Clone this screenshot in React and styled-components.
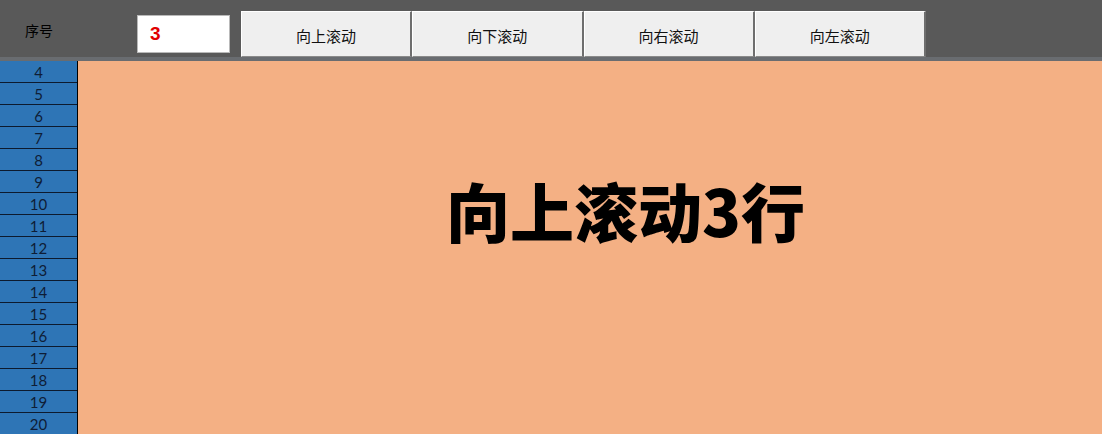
import React from "react";
import styled, { createGlobalStyle } from "styled-components";

const Global = createGlobalStyle`
  html, body { margin: 0; padding: 0; background: #F4B084; }
  body { font-family: "Noto Sans CJK SC", "Noto Sans", sans-serif; }
`;

const Page = styled.div`
  width: 1102px;
  height: 434px;
  overflow: hidden;
  display: flex;
  flex-direction: column;
`;

const Toolbar = styled.div`
  height: 57px;
  flex: 0 0 57px;
  background: #595959;
  border-bottom: 4px solid #696c70;
  display: flex;
  align-items: flex-start;
`;

const Label = styled.div`
  width: 78px;
  height: 57px;
  display: flex;
  align-items: center;
  justify-content: center;
  padding-top: 3px;
  box-sizing: border-box;
  font-size: 14px;
  color: #000;
`;

const NumberBox = styled.div`
  margin-left: 59px;
  margin-top: 15px;
  width: 93px;
  height: 38px;
  box-sizing: border-box;
  background: #fff;
  border: 1px solid #b9b9b9;
  display: flex;
  align-items: center;
  padding-left: 12px;
  font-family: "Liberation Sans", Arial, sans-serif;
  font-weight: 700;
  font-size: 19px;
  color: #e00000;
`;

const Buttons = styled.div`
  margin-left: 11px;
  margin-top: 11px;
  width: 685px;
  display: flex;
`;

const Button = styled.div`
  flex: 1;
  height: 46px;
  box-sizing: border-box;
  background: #efefef;
  border-left: 1px solid #fff;
  border-top: 1px solid #fff;
  border-right: 2px solid #6e6e6e;
  border-bottom: 1px solid #8a8a8a;
  display: flex;
  align-items: center;
  justify-content: center;
  padding-top: 2px;
  font-size: 15px;
  color: #111;
`;

const Body = styled.div`
  flex: 1;
  display: flex;
  min-height: 0;
`;

const RowHeaders = styled.div`
  width: 77px;
  flex: 0 0 77px;
  border-right: 1px solid #000;
  background: #2E75B6;
  display: flex;
  flex-direction: column;
`;

const RowHeader = styled.div`
  height: 21px;
  flex: 0 0 21px;
  border-bottom: 1px solid #0d1a2e;
  display: flex;
  align-items: center;
  justify-content: center;
  font-family: Lato, "Open Sans", sans-serif;
  font-size: 15px;
  color: #0e1d36;
`;

const Canvas = styled.div`
  flex: 1;
  background: #F4B084;
  padding-left: 368px;
  padding-top: 116px;
  box-sizing: border-box;
`;

const Headline = styled.div`
  font-family: "Noto Sans CJK SC", sans-serif;
  font-weight: 900;
  font-size: 64px;
  line-height: 1;
  color: #000;
  white-space: nowrap;
`;

const rows = Array.from({ length: 17 }, (_, i) => i + 4);
const buttons = ["向上滚动", "向下滚动", "向右滚动", "向左滚动"];

export default function App() {
  return (
    <>
      <Global />
      <Page>
        <Toolbar>
          <Label>序号</Label>
          <NumberBox>3</NumberBox>
          <Buttons>
            {buttons.map((b) => (
              <Button key={b}>{b}</Button>
            ))}
          </Buttons>
        </Toolbar>
        <Body>
          <RowHeaders>
            {rows.map((r) => (
              <RowHeader key={r}>{r}</RowHeader>
            ))}
          </RowHeaders>
          <Canvas>
            <Headline>向上滚动3行</Headline>
          </Canvas>
        </Body>
      </Page>
    </>
  );
}
